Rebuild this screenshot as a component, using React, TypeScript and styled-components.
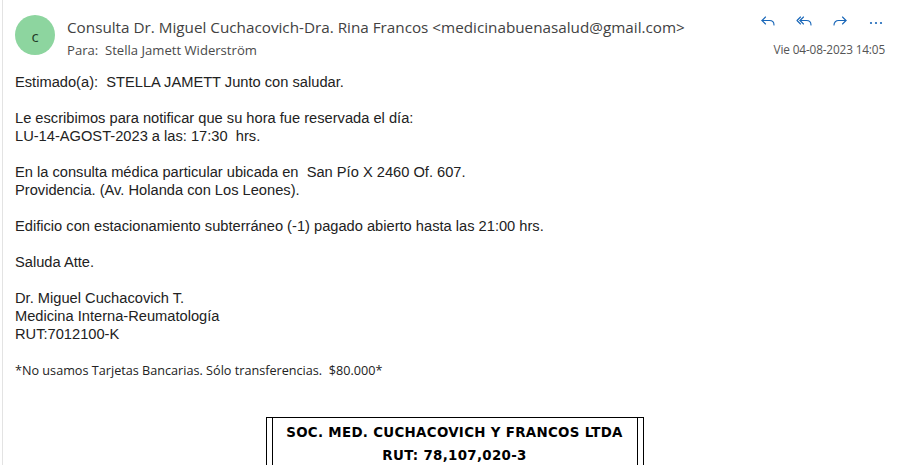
import React from "react";
import styled, { createGlobalStyle } from "styled-components";

const Global = createGlobalStyle`
  html, body { margin: 0; padding: 0; background: #ffffff; }
  body { overflow: hidden; }
`;

const Frame = styled.div`
  margin-left: 2px;
  border-left: 1px solid #e3e3e3;
  height: 465px;
  box-sizing: border-box;
  background: #fff;
`;

const Header = styled.div`
  display: grid;
  grid-template-columns: 40px 1fr auto;
  column-gap: 12px;
  padding: 15px 12px 0 12px;
`;

const Avatar = styled.div`
  width: 40px;
  height: 40px;
  border-radius: 50%;
  background: #8dd59f;
  color: #1f3a26;
  display: flex;
  align-items: center;
  justify-content: center;
  font-family: "Open Sans", sans-serif;
  font-size: 15px;
  padding-top: 1px;
  box-sizing: border-box;
`;

const Meta = styled.div`
  display: flex;
  flex-direction: column;
  padding-top: 2px;
  min-width: 0;
`;

const Sender = styled.div`
  font-family: "Open Sans", sans-serif;
  font-size: 15.25px;
  line-height: 20px;
  color: #424242;
  white-space: nowrap;
`;

const To = styled.div`
  font-family: "Open Sans", sans-serif;
  font-size: 13.1px;
  line-height: 16px;
  color: #4a4a4a;
  margin-top: 5px;
`;

const Side = styled.div`
  display: flex;
  flex-direction: column;
  align-items: flex-end;
`;

const Actions = styled.div`
  display: flex;
  gap: 20px;
  height: 16px;
  align-items: center;
  margin-top: -1px;
  padding-right: 1px;
`;

const IconBtn = styled.span`
  display: inline-flex;
  width: 16px;
  height: 16px;
  color: #1866b8;
`;

const DateText = styled.div`
  font-family: "Open Sans", sans-serif;
  font-size: 11.8px;
  line-height: 16px;
  color: #555;
  margin-top: 11px;
  letter-spacing: -0.15px;
`;

const Body = styled.div`
  padding: 15px 3px 0 12px;
  font-family: "Liberation Sans", Arial, sans-serif;
  font-size: 14.67px;
  line-height: 18px;
  color: #222;
`;

const Para = styled.p`
  margin: 0 0 18px 0;
`;

const Note = styled.p`
  margin: 0;
  font-family: "Open Sans", sans-serif;
  font-size: 12.65px;
  line-height: 18px;
  color: #222;
`;

const BoxWrap = styled.div`
  display: flex;
  justify-content: center;
  margin-top: 38px;
`;

const Box = styled.div`
  border-left: 1px solid #000;
  border-right: 1px solid #000;
  border-top: 1px solid #000;
  width: 378px;
  box-sizing: border-box;
  padding: 0 5px;
`;

const Cell = styled.div`
  border-left: 1px solid #000;
  border-right: 1px solid #000;
  text-align: center;
  font-family: "DejaVu Sans", sans-serif;
  font-weight: bold;
  font-size: 13.4px;
  line-height: 23px;
  color: #000;
  padding-top: 3px;
  height: 60px;
  letter-spacing: 0.3px;
`;

const ReplyIcon = () => (
  <svg width="16" height="16" viewBox="0 0 16 16" fill="none" stroke="currentColor" strokeWidth="1.1" strokeLinecap="round" strokeLinejoin="round">
    <path d="M5.5 3 L2 6.5 L5.5 10" />
    <path d="M2 6.5 H9.5 C12 6.5 14 8.3 14 11" />
  </svg>
);

const ReplyAllIcon = () => (
  <svg width="16" height="16" viewBox="0 0 16 16" fill="none" stroke="currentColor" strokeWidth="1.1" strokeLinecap="round" strokeLinejoin="round">
    <path d="M4.5 3 L1 6.5 L4.5 10" />
    <path d="M7.5 3 L4 6.5 L7.5 10" />
    <path d="M4 6.5 H10.5 C13 6.5 15 8.3 15 11" />
  </svg>
);

const ForwardIcon = () => (
  <svg width="16" height="16" viewBox="0 0 16 16" fill="none" stroke="currentColor" strokeWidth="1.1" strokeLinecap="round" strokeLinejoin="round">
    <path d="M10.5 3 L14 6.5 L10.5 10" />
    <path d="M14 6.5 H6.5 C4 6.5 2 8.3 2 11" />
  </svg>
);

const MoreIcon = () => (
  <svg width="16" height="16" viewBox="0 0 16 16" fill="currentColor">
    <circle cx="3" cy="9" r="1.1" />
    <circle cx="8" cy="9" r="1.1" />
    <circle cx="13" cy="9" r="1.1" />
  </svg>
);

export default function App() {
  return (
    <>
      <Global />
      <Frame>
        <Header>
          <Avatar>c</Avatar>
          <Meta>
            <Sender>Consulta Dr. Miguel Cuchacovich-Dra. Rina Francos &lt;medicinabuenasalud@gmail.com&gt;</Sender>
            <To>Para:&nbsp; Stella Jamett Widerström</To>
          </Meta>
          <Side>
            <Actions>
              <IconBtn><ReplyIcon /></IconBtn>
              <IconBtn><ReplyAllIcon /></IconBtn>
              <IconBtn><ForwardIcon /></IconBtn>
              <IconBtn><MoreIcon /></IconBtn>
            </Actions>
            <DateText>Vie 04-08-2023 14:05</DateText>
          </Side>
        </Header>
        <Body>
          <Para>Estimado(a):&nbsp; STELLA JAMETT Junto con saludar.</Para>
          <Para>
            Le escribimos para notificar que su hora fue reservada el día:<br />
            LU-14-AGOST-2023 a las: 17:30&nbsp; hrs.
          </Para>
          <Para>
            En la consulta médica particular ubicada en&nbsp; San Pío X 2460 Of. 607.<br />
            Providencia. (Av. Holanda con Los Leones).
          </Para>
          <Para>Edificio con estacionamiento subterráneo (-1) pagado abierto hasta las 21:00 hrs.</Para>
          <Para>Saluda Atte.</Para>
          <Para>
            Dr. Miguel Cuchacovich T.<br />
            Medicina Interna-Reumatología<br />
            RUT:7012100-K
          </Para>
          <Note>*No usamos Tarjetas Bancarias. Sólo transferencias.&nbsp; $80.000*</Note>
          <BoxWrap>
            <Box>
              <Cell>
                SOC. MED. CUCHACOVICH Y FRANCOS LTDA<br />
                RUT: 78,107,020-3
              </Cell>
            </Box>
          </BoxWrap>
        </Body>
      </Frame>
    </>
  );
}
